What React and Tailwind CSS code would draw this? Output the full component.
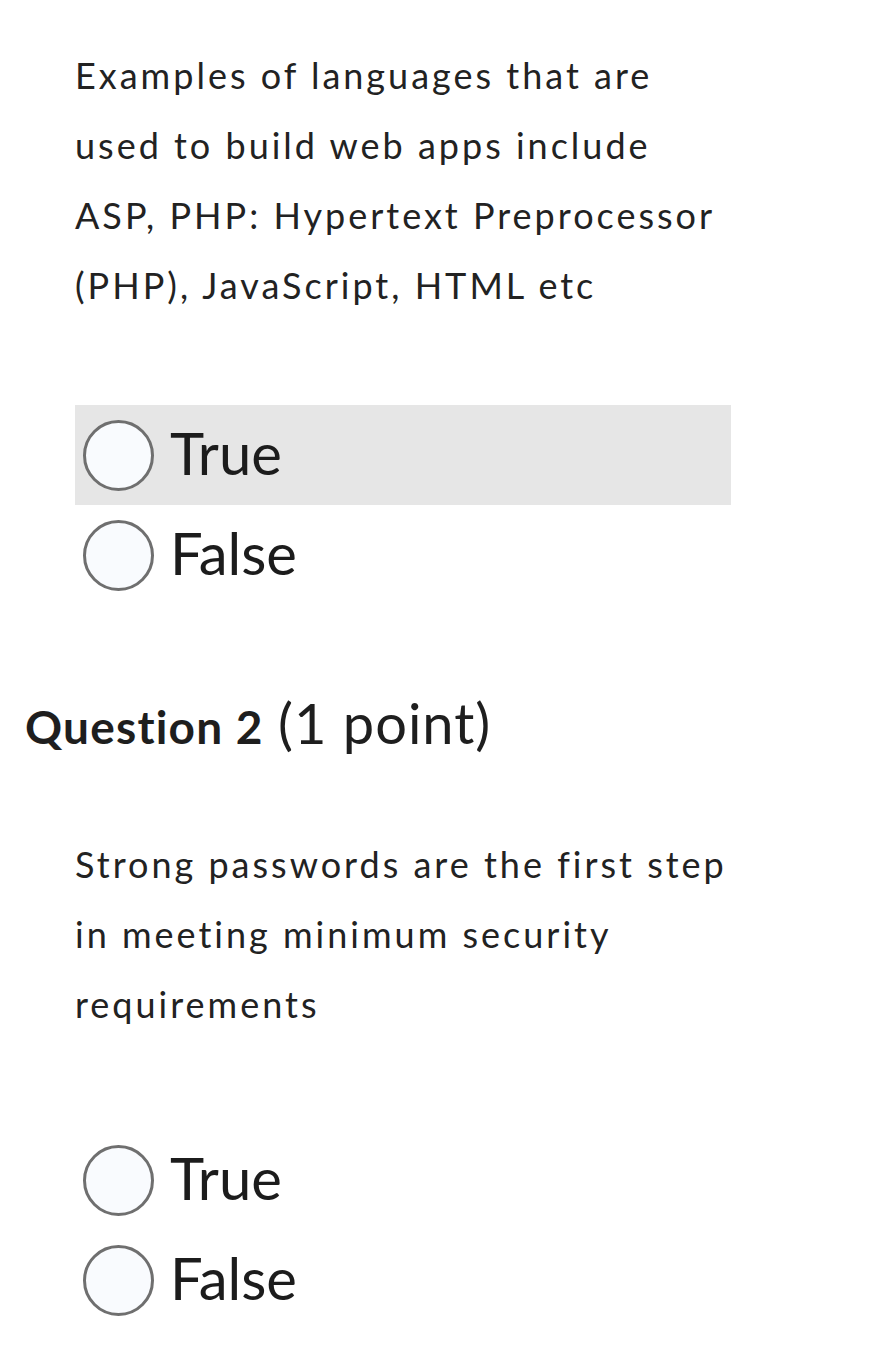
import { useState } from 'react';

const questions = [
  {
    id: 1,
    text: 'Examples of languages that are used to build web apps include ASP, PHP: Hypertext Preprocessor (PHP), JavaScript, HTML etc',
    hover: 'true',
  },
  {
    id: 2,
    title: 'Question 2',
    points: '(1 point)',
    text: 'Strong passwords are the first step in meeting minimum security requirements',
  },
];

function Radio({ label, active }) {
  return (
    <label
      className={`flex items-center h-[100px] w-[656px] pl-2 gap-4 ${active ? 'bg-[#e6e6e6]' : ''}`}
    >
      <span className="w-[71px] h-[71px] rounded-full border-[3px] border-[#6f6f6f] bg-[#f9fbfe] shrink-0" />
      <span className="text-[58px] leading-none text-[#1c1c1c] -mt-1">{label}</span>
    </label>
  );
}

export default function App() {
  const [answers] = useState({});

  return (
    <div className="w-[879px] h-[1346px] bg-white text-[#222] font-['Lato',_'Open_Sans',_sans-serif] [font-variant-ligatures:none]">
      {questions.map((q) => (
        <div key={q.id}>
          {q.title && (
            <h2 className="pl-[25px] pt-[90px] text-[56px] leading-[56px] text-[#1e1e1e] whitespace-nowrap">
              <span className="font-bold text-[46px] tracking-[1.2px]">{q.title}</span>{' '}
              <span className="tracking-[1px]">{q.points}</span>
            </h2>
          )}
          <p
            className={`ml-[75px] w-[658px] text-[36px] leading-[70px] tracking-[3px] ${q.title ? 'pt-[74px]' : 'pt-[40px]'}`}
          >
            {q.text}
          </p>
          <div className={`pl-[75px] ${q.title ? 'pt-[91px]' : 'pt-[85px]'}`}>
            <Radio label="True" active={q.hover === 'true' && !answers[q.id]} />
            <Radio label="False" />
          </div>
        </div>
      ))}
    </div>
  );
}
